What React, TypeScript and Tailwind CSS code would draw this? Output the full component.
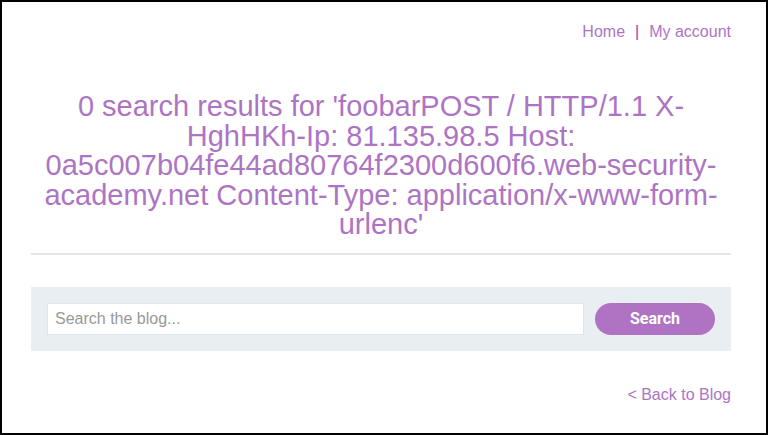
import React from "react";

export default function App() {
  return (
    <div className="w-[768px] h-[435px] border-2 border-black bg-white font-['Liberation_Sans',Arial,sans-serif] text-[#ae74c4] overflow-hidden">
      <div className="pl-[29px] pr-[35px]">
        <div className="flex justify-end items-center pt-[20px] text-[16px] leading-[20px]">
          <a className="cursor-pointer">Home</a>
          <span className="mx-[10px] text-[#9b3aa8]">|</span>
          <a className="cursor-pointer">My account</a>
        </div>
        <h1 className="mt-[50px] text-center text-[29px] leading-[29.5px] font-normal break-words px-[8px]">
          0 search results for 'foobarPOST / HTTP/1.1 X-HghHKh-Ip: 81.135.98.5 Host: 0a5c007b04fe44ad80764f2300d600f6.web-security-academy.net Content-Type: application/x-www-form-urlenc'
        </h1>
        <hr className="mt-[13px] border-t-2 border-[#e6e6e6]" />
        <div className="mt-[32px] bg-[#e9eef2] h-[64px] px-[16px] flex items-center gap-[11px]">
          <input
            className="flex-1 h-[32px] bg-white border border-[#e2e6e9] px-[7px] text-[16px] text-[#333] placeholder:text-[#999] outline-none font-['Liberation_Sans',Arial,sans-serif]"
            placeholder="Search the blog..."
          />
          <button className="w-[120px] h-[32px] rounded-full bg-[#b073c3] text-white text-[16px] font-bold font-['Roboto',sans-serif]">
            Search
          </button>
        </div>
        <div className="flex justify-end mt-[34px] text-[16px] leading-[20px]">
          <a className="cursor-pointer">&lt; Back to Blog</a>
        </div>
      </div>
    </div>
  );
}
